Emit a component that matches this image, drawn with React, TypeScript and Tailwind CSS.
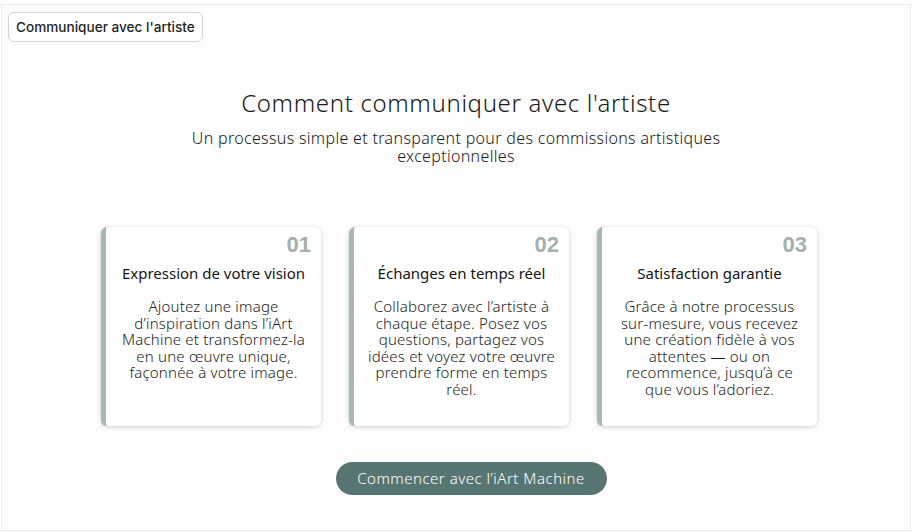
import React from "react";

const steps = [
  {
    num: "01",
    title: "Expression de votre vision",
    text: "Ajoutez une image d’inspiration dans l’iArt Machine et transformez-la en une œuvre unique, façonnée à votre image.",
  },
  {
    num: "02",
    title: "Échanges en temps réel",
    text: "Collaborez avec l’artiste à chaque étape. Posez vos questions, partagez vos idées et voyez votre œuvre prendre forme en temps réel.",
  },
  {
    num: "03",
    title: "Satisfaction garantie",
    text: "Grâce à notre processus sur-mesure, vous recevez une création fidèle à vos attentes — ou on recommence, jusqu’à ce que vous l’adoriez.",
  },
];

const body = { fontFamily: "'Noto Sans', Lato, sans-serif" };

export default function App() {
  return (
    <div className="w-[912px] h-[532px] bg-white pt-1 px-[1px] pb-[1px]">
      <div className="h-full border border-[#ececec] bg-[#fdfdfd] relative" style={body}>
        <div className="pt-[7px] pl-[6px]">
          <button
            className="h-[30px] px-[7px] text-[13.6px] font-medium text-[#1f1f1f] border border-[#d4d4d4] rounded-md bg-white"
            style={{ fontFamily: "Inter, 'Liberation Sans', sans-serif" }}
          >
            Communiquer avec l'artiste
          </button>
        </div>

        <div className="flex flex-col items-center mt-[46px]">
          <h1 className="text-[24px] leading-[30px] font-light tracking-[0.65px] text-[#1a1a1a]">
            Comment communiquer avec l'artiste
          </h1>
          <p className="mt-[11px] max-w-[560px] text-center text-[16px] leading-[18px] font-light tracking-[0.33px] text-[#1a1a1a]">
            Un processus simple et transparent pour des commissions artistiques exceptionnelles
          </p>

          <div className="flex gap-[28px] mt-[62px] pl-[6px]">
            {steps.map((s) => (
              <div
                key={s.num}
                className="w-[220px] h-[199px] bg-white rounded-md border-l-[5px] border-[#a8b8b2] shadow-[0_1px_4px_rgba(0,0,0,0.18)] flex flex-col px-[10px] pt-[6px]"
              >
                <div
                  className="text-right text-[22px] leading-[24px] font-bold text-[#a3b1ad]"
                  style={{ fontFamily: "'Liberation Sans', Arial, sans-serif" }}
                >
                  {s.num}
                </div>
                <h3 className="mt-[7px] text-center text-[15px] leading-[18px] text-[#141414]">{s.title}</h3>
                <p className="mt-[16px] text-center text-[15px] leading-[16.6px] font-light tracking-[0.2px] text-[#1e1e1e]">
                  {s.text}
                </p>
              </div>
            ))}
          </div>

          <button className="mt-[36px] ml-[30px] h-[33px] w-[271px] rounded-full bg-[#577673] text-white text-[15px] font-light tracking-[0.5px]">
            Commencer avec l’iArt Machine
          </button>
        </div>
      </div>
    </div>
  );
}
